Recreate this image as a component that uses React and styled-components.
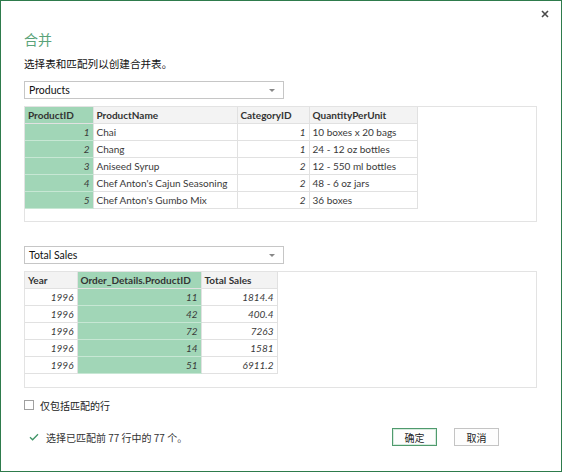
import React from 'react'
import styled, { createGlobalStyle } from 'styled-components'

const GlobalStyle = createGlobalStyle`
  body {
    margin: 0;
    background: #fff;
  }
`

const productCols = [
  { key: 'id', title: 'ProductID', width: 68, num: true, key_: true },
  { key: 'name', title: 'ProductName', width: 144 },
  { key: 'cat', title: 'CategoryID', width: 72, num: true },
  { key: 'qty', title: 'QuantityPerUnit', width: 108 },
]

const products = [
  { id: 1, name: 'Chai', cat: 1, qty: '10 boxes x 20 bags' },
  { id: 2, name: 'Chang', cat: 1, qty: '24 - 12 oz bottles' },
  { id: 3, name: 'Aniseed Syrup', cat: 2, qty: '12 - 550 ml bottles' },
  { id: 4, name: "Chef Anton's Cajun Seasoning", cat: 2, qty: '48 - 6 oz jars' },
  { id: 5, name: "Chef Anton's Gumbo Mix", cat: 2, qty: '36 boxes' },
]

const salesCols = [
  { key: 'year', title: 'Year', width: 52, num: true },
  { key: 'pid', title: 'Order_Details.ProductID', width: 124, num: true, key_: true },
  { key: 'total', title: 'Total Sales', width: 76, num: true },
]

const sales = [
  { year: 1996, pid: 11, total: '1814.4' },
  { year: 1996, pid: 42, total: '400.4' },
  { year: 1996, pid: 72, total: '7263' },
  { year: 1996, pid: 14, total: '1581' },
  { year: 1996, pid: 51, total: '6911.2' },
]

const DataTable = ({ cols, rows }) => (
  <Table>
    <colgroup>
      {cols.map(c => <col key={c.key} style={{ width: c.width }} />)}
    </colgroup>
    <thead>
      <tr>
        {cols.map(c => <Th key={c.key} $selected={c.key_}>{c.title}</Th>)}
      </tr>
    </thead>
    <tbody>
      {rows.map((r, i) => (
        <tr key={i}>
          {cols.map(c => (
            <Td key={c.key} $selected={c.key_} $num={c.num}>{r[c.key]}</Td>
          ))}
        </tr>
      ))}
    </tbody>
  </Table>
)

const Select = ({ value, gap }) => (
  <Dropdown $gap={gap}>
    <span>{value}</span>
    <Caret />
  </Dropdown>
)

const App = () => {
  return (
    <>
      <GlobalStyle />
      <Dialog>
        <TopBar>
          <CloseButton aria-label="close">
            <svg width="8" height="8" viewBox="0 0 8 8">
              <path d="M1 1 L7 7 M7 1 L1 7" stroke="#4a4a4a" strokeWidth="1.6" />
            </svg>
          </CloseButton>
        </TopBar>
        <Title>合并</Title>
        <Subtitle>选择表和匹配列以创建合并表。</Subtitle>

        <Select value="Products" />
        <Panel $height={116}>
          <DataTable cols={productCols} rows={products} />
        </Panel>

        <Select value="Total Sales" gap />
        <Panel $height={117}>
          <DataTable cols={salesCols} rows={sales} />
        </Panel>

        <CheckRow>
          <Box />
          <span>仅包括匹配的行</span>
        </CheckRow>

        <Footer>
          <Status>
            <svg width="10" height="8" viewBox="0 0 10 8">
              <path d="M1 4.2 L3.6 6.8 L9 1.2" fill="none" stroke="#3f9466" strokeWidth="1.3" />
            </svg>
            <span>选择已匹配前 77 行中的 77 个。</span>
          </Status>
          <Buttons>
            <Button $primary>确定</Button>
            <Button>取消</Button>
          </Buttons>
        </Footer>
      </Dialog>
    </>
  )
}

export default App

const Dialog = styled.div`
width: 562px;
height: 472px;
box-sizing: border-box;
border: 1px solid #2e7b4c;
background: #fff;
padding: 0 24px 0 23px;
display: flex;
flex-direction: column;
font-family: Lato, "Noto Sans CJK SC", sans-serif;
color: #222;
`

const TopBar = styled.div`
height: 28px;
display: flex;
justify-content: flex-end;
align-items: center;
margin-right: -14px;
`

const CloseButton = styled.div`
width: 12px;
height: 12px;
display: flex;
align-items: center;
justify-content: center;
margin-top: -3px;
`

const Title = styled.div`
font-family: "Noto Sans CJK SC", sans-serif;
font-size: 14px;
line-height: 20px;
height: 20px;
color: #5aa37a;
`

const Subtitle = styled.div`
margin-top: 7px;
font-family: "Noto Sans CJK SC", sans-serif;
font-size: 10.6px;
line-height: 16px;
color: #111;
`

const Dropdown = styled.div`
margin-top: ${p => (p.$gap ? '24px' : '9px')};
width: 260px;
height: 18px;
box-sizing: border-box;
border: 1px solid #c6c6c6;
display: flex;
align-items: center;
justify-content: space-between;
padding: 0 8px 0 4px;
font-size: 10.5px;
color: #111;
`

const Caret = styled.span`
width: 0;
height: 0;
border-left: 3px solid transparent;
border-right: 3px solid transparent;
border-top: 3px solid #888;
`

const Panel = styled.div`
margin-top: 7px;
height: ${p => p.$height}px;
box-sizing: border-box;
border: 1px solid #e3e3e3;
overflow: hidden;
`

const Table = styled.table`
border-collapse: collapse;
table-layout: fixed;
font-size: 10px;
color: #3a3a3a;
`

const Th = styled.th`
height: 16px;
padding: 0 3px;
text-align: left;
font-weight: 700;
white-space: nowrap;
overflow: hidden;
color: #333;
background: ${p => (p.$selected ? '#a1d6b7' : '#f3f3f3')};
border-right: 1px solid #e1e1e1;
border-bottom: 1px solid #e1e1e1;
`

const Td = styled.td`
height: 16px;
padding: 0 3px;
white-space: nowrap;
overflow: hidden;
text-align: ${p => (p.$num ? 'right' : 'left')};
font-style: ${p => (p.$num ? 'italic' : 'normal')};
background: ${p => (p.$selected ? '#a1d6b7' : '#fff')};
border-right: 1px solid #e1e1e1;
border-bottom: 1px solid ${p => (p.$selected ? '#c7e7d4' : '#e1e1e1')};
`

const CheckRow = styled.div`
margin-top: 10px;
height: 14px;
display: flex;
align-items: center;
gap: 6px;
font-family: "Noto Sans CJK SC", sans-serif;
font-size: 10px;
color: #222;
`

const Box = styled.span`
width: 10px;
height: 10px;
box-sizing: border-box;
border: 1px solid #a0a0a0;
background: #fff;
`

const Footer = styled.div`
margin-top: 16px;
display: flex;
justify-content: space-between;
align-items: center;
`

const Status = styled.div`
display: flex;
align-items: center;
gap: 7px;
padding-left: 5px;
font-family: "Noto Sans CJK SC", sans-serif;
font-size: 10px;
color: #333;
`

const Buttons = styled.div`
display: flex;
gap: 17px;
margin-right: 38px;
`

const Button = styled.button`
width: 45px;
height: 18px;
box-sizing: border-box;
padding: 0;
background: #fdfdfd;
border: 1px solid ${p => (p.$primary ? '#4f9a6d' : '#c4c4c4')};
box-shadow: ${p => (p.$primary ? 'inset 0 0 0 1px #d6ebde' : 'none')};
font-family: "Noto Sans CJK SC", sans-serif;
font-size: 10px;
color: #222;
cursor: pointer;
`
